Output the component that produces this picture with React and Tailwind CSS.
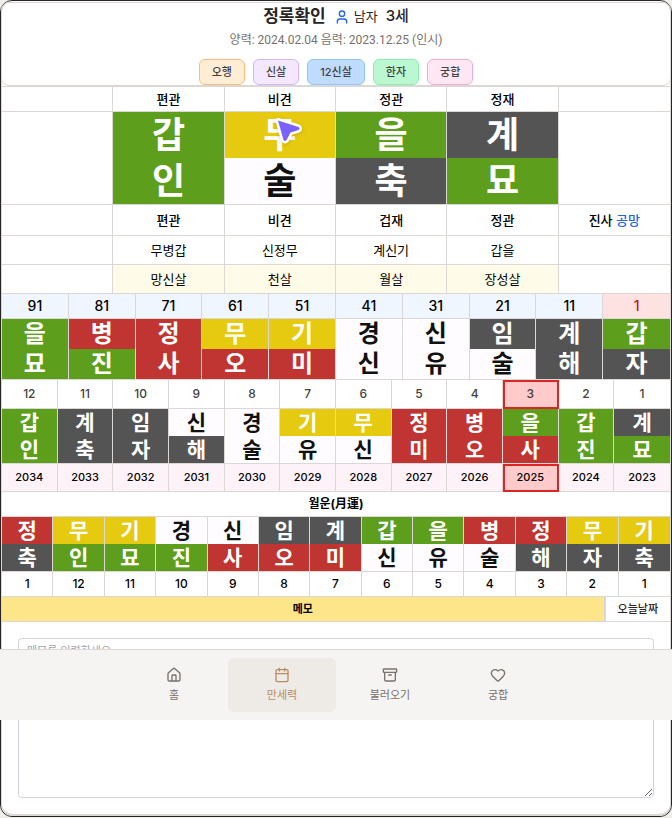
import { Archive, Calendar, Heart, House, User } from "lucide-react";

const TONES = {
  g: "bg-[#5d9f1c] text-white",
  r: "bg-[#c03431] text-white",
  y: "bg-[#e5ca10] text-white",
  k: "bg-[#545454] text-white",
  w: "bg-[#fefcfe] text-[#111111]",
};

const STEM = { 갑: "g", 을: "g", 병: "r", 정: "r", 무: "y", 기: "y", 경: "w", 신: "w", 임: "k", 계: "k" };
const BRANCH = { 자: "k", 축: "k", 인: "g", 묘: "g", 진: "g", 사: "r", 오: "r", 미: "r", 신: "w", 유: "w", 술: "w", 해: "k" };

const DECADES = { ages: [91, 81, 71, 61, 51, 41, 31, 21, 11, 1], top: "을병정무기경신임계갑", bottom: "묘진사오미신유술해자" };
const YEARS = {
  ages: [12, 11, 10, 9, 8, 7, 6, 5, 4, 3, 2, 1],
  top: "갑계임신경기무정병을갑계",
  bottom: "인축자해술유신미오사진묘",
  years: [2034, 2033, 2032, 2031, 2030, 2029, 2028, 2027, 2026, 2025, 2024, 2023],
};
const MONTHS = { top: "정무기경신임계갑을병정무기", bottom: "축인묘진사오미신유술해자축", months: [1, 12, 11, 10, 9, 8, 7, 6, 5, 4, 3, 2, 1] };

const GLYPH_SIZES = {
  lg: "h-[46px] text-[36px]",
  md: "h-[30px] text-[24px]",
  sm: "h-[27px] text-[21px]",
};

const CELL = "border-b border-r border-[#dad7d5] p-0 text-center align-middle last:border-r-0";

function Table({ label, children }) {
  return (
    <table aria-label={label} className="w-full table-fixed border-separate border-spacing-0">
      <tbody>{children}</tbody>
    </table>
  );
}

function Glyph({ char, tone, size }) {
  return (
    <div className={`flex items-center justify-center overflow-hidden font-bold leading-none ${GLYPH_SIZES[size]} ${TONES[tone]}`}>
      {char}
    </div>
  );
}

function Pillar({ stem, branch, size }) {
  return (
    <td className={CELL}>
      {stem && (
        <>
          <Glyph char={stem} tone={STEM[stem]} size={size} />
          <Glyph char={branch} tone={BRANCH[branch]} size={size} />
        </>
      )}
    </td>
  );
}

function PillarRow({ top, bottom, size }) {
  return (
    <tr>
      {[...top].map((stem, i) => (
        <Pillar key={i} stem={stem} branch={bottom[i]} size={size} />
      ))}
    </tr>
  );
}

function TextRow({ items, className = "", filled = "" }) {
  return (
    <tr>
      {items.map((item, i) => (
        <td key={i} className={`${CELL} ${className} ${item ? filled : ""}`}>{item}</td>
      ))}
    </tr>
  );
}

function Pointer() {
  return (
    <svg aria-hidden="true" viewBox="0 0 32 34" className="absolute left-1/2 top-0 h-[34px] w-8 -translate-x-2 drop-shadow-sm">
      <path
        d="M6 8.500 L26.500 15 Q28.500 16.500 26.500 18 L18.500 20.500 L14.500 28 Q13 30 11.500 28 Z"
        fill="#7b61ff"
        stroke="#fff"
        strokeWidth="5"
        strokeLinejoin="round"
        paintOrder="stroke"
      />
    </svg>
  );
}

const CHIPS = [
  ["오행", "border-[#fdba74] bg-[#ffedd5]"],
  ["신살", "border-[#d8b4fe] bg-[#f3e8ff]"],
  ["12신살", "border-[#93c5fd] bg-[#bfdbfe]"],
  ["한자", "border-[#86efac] bg-[#bbf7d0]"],
  ["궁합", "border-[#f9a8d4] bg-[#fce7f3]"],
];

const NAV = [
  ["홈", House],
  ["만세력", Calendar],
  ["불러오기", Archive],
  ["궁합", Heart],
];

export default function App() {
  return (
    <div className="min-h-screen bg-[#f0eeeb] font-[Inter,'Noto_Sans_CJK_KR',sans-serif] text-black">
      <main className="rounded-xl border border-[#292524] bg-white">
        <div className="rounded-xl border-x border-b-2 border-[#dad7d5] pt-px">
          <header className="-mx-px flex flex-col items-center rounded-lg border border-[#dad7d5]">
            <div className="flex h-[27px] items-center text-[#292524]">
              <h1 className="text-[17px] font-bold">정록확인</h1>
              <User className="ml-2 size-4 text-[#2563eb]" />
              <span className="ml-1 text-[13px]">남자</span>
              <span className="ml-2 text-[15px] font-medium">3세</span>
            </div>
            <p className="h-[18px] font-[Roboto,'Noto_Sans_CJK_KR',sans-serif] text-xs leading-5 text-[#78716c]">양력: 2024.02.04 음력: 2023.12.25 (인시)</p>
            <div className="mt-[11px] flex gap-2">
              {CHIPS.map(([label, tone]) => (
                <button key={label} type="button" className={`h-[26px] rounded-md border px-3 text-[11px] font-medium text-[#44403c] ${tone}`}>
                  {label}
                </button>
              ))}
            </div>
          </header>

          <div className="border-t border-[#dad7d5]">
            <Table label="사주">
              <TextRow items={["", "편관", "비견", "정관", "정재", ""]} className="h-[25px] text-[13px] font-medium leading-5" />
              <tr>
                <Pillar />
                <Pillar stem="갑" branch="인" size="lg" />
                <td className={`${CELL} relative`}>
                  <Glyph char="무" tone="y" size="lg" />
                  <Glyph char="술" tone="w" size="lg" />
                  <Pointer />
                </td>
                <Pillar stem="을" branch="축" size="lg" />
                <Pillar stem="계" branch="묘" size="lg" />
                <Pillar />
              </tr>
              <TextRow
                items={["", "편관", "비견", "겁재", "정관", <span key="void">진사 <span className="text-[#2563eb]">공망</span></span>]}
                className="h-[31px] text-[13px] font-medium leading-5"
              />
              <TextRow items={["", "무병갑", "신정무", "계신기", "갑을", ""]} className="h-[29px] text-[13px] leading-5" />
              <TextRow items={["", "망신살", "천살", "월살", "장성살", ""]} className="h-[29px] text-[13px] leading-5" filled="bg-[#fefce8]" />
            </Table>

            <Table label="대운">
              <tr>
                {DECADES.ages.map((age) => (
                  <td key={age} className={`${CELL} h-[25px] text-sm font-medium leading-5 ${age === 1 ? "bg-[#fee2e2] text-[#b91c1c]" : "bg-[#eff6ff]"}`}>{age}</td>
                ))}
              </tr>
              <PillarRow top={DECADES.top} bottom={DECADES.bottom} size="md" />
            </Table>

            <Table label="연운">
              <tr>
                {YEARS.ages.map((age) => (
                  <td key={age} className={`${CELL} h-[29px] text-xs font-medium text-[#44403c] ${age === 3 ? "bg-[#fecaca] outline-2 -outline-offset-2 outline-[#dc2626]" : ""}`}>{age}</td>
                ))}
              </tr>
              <PillarRow top={YEARS.top} bottom={YEARS.bottom} size="sm" />
              <tr>
                {YEARS.years.map((year) => (
                  <td key={year} className={`${CELL} h-[28px] text-[11px] font-medium ${year === 2025 ? "bg-[#fecaca] outline-2 -outline-offset-2 outline-[#dc2626]" : "bg-[#fdf2f8]"}`}>{year}</td>
                ))}
              </tr>
            </Table>

            <h2 className="h-[25px] border-b border-[#dad7d5] text-center text-xs font-bold leading-6">월운(月運)</h2>

            <Table label="월운">
              <PillarRow top={MONTHS.top} bottom={MONTHS.bottom} size="sm" />
              <TextRow items={MONTHS.months} className="h-[25px] text-xs font-medium" />
            </Table>
          </div>

          <div className="flex h-[25px] border-b border-[#dad7d5] text-[11px]">
            <label htmlFor="memo" className="flex flex-1 items-center justify-center bg-[#fde68a] font-bold">메모</label>
            <button type="button" className="border-l-2 border-[#dad7d5] px-3 font-medium text-[#292524]">오늘날짜</button>
          </div>
          <div className="p-4">
            <textarea id="memo" placeholder="메모를 입력하세요" className="block h-40 w-full rounded border border-[#d1d5db] bg-white px-2 py-1 text-[11px] leading-4 placeholder:text-[#9ca3af]" />
          </div>
        </div>
      </main>

      <nav className="fixed inset-x-0 bottom-[98px] flex justify-center border-t border-[#dad7d5] bg-[#f5f4f2] pb-2 pt-2">
        {NAV.map(([label, Icon]) => {
          const active = label === "만세력";
          return (
            <a key={label} href="#" className={`flex h-[54px] w-[108px] flex-col items-center justify-center gap-1 rounded-md text-[11px] leading-4 ${active ? "bg-[#eeebe6] text-[#b98d62]" : "text-[#78716c]"}`}>
              <Icon className="size-4" strokeWidth={2} />
              {label}
            </a>
          );
        })}
      </nav>
    </div>
  );
}
